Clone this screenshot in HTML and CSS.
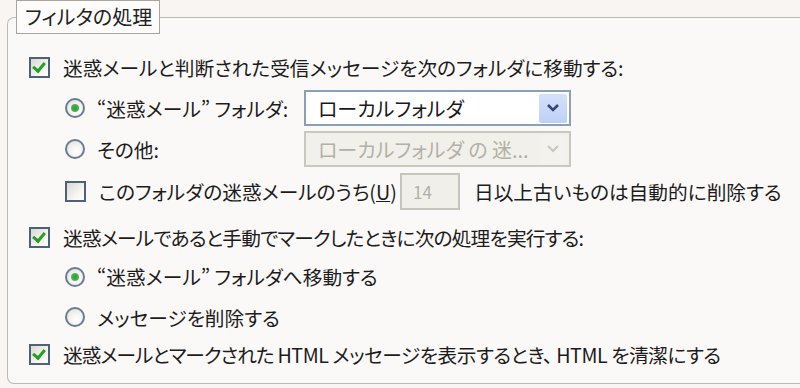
FILE: index.html
```html
<!DOCTYPE html>
<html lang="ja">
<head>
<meta charset="utf-8">
<link rel="stylesheet" href="styles.css">
</head>
<body>
<fieldset class="group">
  <legend class="legend">フィルタの処理</legend>
  <div class="row r1 lvl1">
    <span class="cb checked"></span>
    <span class="label">迷惑メールと判断された受信メッセージを次のフォルダに移動する:</span>
  </div>
  <div class="row r2 lvl2">
    <span class="rb checked"></span>
    <span class="label fixed">“迷惑メール” フォルダ:</span>
    <span class="select">
      <span class="sel-text">ローカルフォルダ</span>
      <span class="sel-btn"><svg width="14" height="10" viewBox="0 0 14 10"><path d="M2 2 L7 7 L12 2" fill="none" stroke="#33466f" stroke-width="2.6"/></svg></span>
    </span>
  </div>
  <div class="row r3 lvl2">
    <span class="rb"></span>
    <span class="label fixed">その他:</span>
    <span class="select disabled">
      <span class="sel-text">ローカルフォルダ の 迷...</span>
      <span class="sel-btn"><svg width="14" height="10" viewBox="0 0 14 10"><path d="M2 2 L7 7 L12 2" fill="none" stroke="#cbc8bf" stroke-width="2.2"/></svg></span>
    </span>
  </div>
  <div class="row r4 lvl2">
    <span class="cb"></span>
    <span class="label keep">このフォルダの迷惑メールのうち(<u>U</u>)</span>
    <span class="numbox">14</span>
    <span class="label">日以上古いものは自動的に削除する</span>
  </div>
  <div class="row r5 lvl1">
    <span class="cb checked"></span>
    <span class="label tight">迷惑メールであると手動でマークしたときに次の処理を実行する:</span>
  </div>
  <div class="row r6 lvl2">
    <span class="rb checked"></span>
    <span class="label">“迷惑メール” フォルダへ移動する</span>
  </div>
  <div class="row r7 lvl2">
    <span class="rb"></span>
    <span class="label">メッセージを削除する</span>
  </div>
  <div class="row r8 lvl1">
    <span class="cb checked"></span>
    <span class="label tight8"><span class="tighter">迷惑メールとマークされた</span> HTML メッセージを表示するとき、 HTML を清潔にする</span>
  </div>
</fieldset>
</body>
</html>
```
FILE: styles.css
```css
html, body {
  margin: 0;
  padding: 0;
  background: #f8f5f2;
  width: 800px;
  height: 388px;
  overflow: hidden;
  font-family: "Noto Sans CJK JP", "Liberation Sans", sans-serif;
  font-feature-settings: "palt";
  color: #1c1c1c;
}

.group {
  margin: 0 0 0 7px;
  padding: 0;
  width: 820px;
  height: 384px;
  box-sizing: border-box;
  border: 1px solid #bdb9b3;
  border-right: none;
  border-radius: 7px 0 0 7px;
  background: #fbf9f7;
}

.legend {
  margin-left: 8px;
  padding: 3px 7px 3px 8px;
  border: 1px solid #a9a6a2;
  background: #fdfcfb;
  font-size: 20px;
  line-height: 26px;
  color: #222;
}

.row {
  display: flex;
  align-items: center;
  height: 41px;
  font-size: 19.7px;
}

.lvl1 { padding-left: 21px; }
.lvl2 { padding-left: 57px; }

.r1 { margin-top: 13px; }
.r2 { height: 40px; }
.r3 { height: 42px; }
.r4 { height: 42px; }
.r5 { margin-top: 4px; height: 42px; }
.r6 { height: 37px; }
.r7 { height: 44px; }
.r8 { height: 30px; }

.label { white-space: nowrap; }
.fixed { width: 207px; }
.keep { width: 301px; flex: none; }
.tight { letter-spacing: -0.8px; }
.tight8 { letter-spacing: -0.45px; }
.tighter { letter-spacing: -1px; }

.cb {
  flex: none;
  width: 17px;
  height: 17px;
  border: 2px solid #4f6079;
  background: linear-gradient(135deg, #d9d8d0 0%, #f4f4f0 60%, #ffffff 100%);
  margin-right: 13px;
  position: relative;
}
.cb.checked::after {
  content: "";
  position: absolute;
  left: 4px;
  top: 1px;
  width: 5px;
  height: 9px;
  border-right: 3px solid #24a024;
  border-bottom: 3px solid #24a024;
  transform: rotate(40deg);
}

.rb {
  flex: none;
  width: 16px;
  height: 16px;
  border-radius: 50%;
  border: 2px solid #6b7c92;
  background: radial-gradient(circle at 60% 65%, #ffffff 0%, #f2f1ec 50%, #d6d5cd 100%);
  margin-right: 12px;
  position: relative;
}
.rb.checked::after {
  content: "";
  position: absolute;
  left: 4px;
  top: 4px;
  width: 8px;
  height: 8px;
  border-radius: 50%;
  background: radial-gradient(circle, #2f9a35 0%, #40b24a 55%, #8fd690 100%);
}

.select {
  flex: none;
  width: 267px;
  height: 36px;
  box-sizing: border-box;
  border: 2px solid #8aa0b9;
  background: #ffffff;
  display: flex;
  align-items: center;
  justify-content: space-between;
  padding: 0 2px 0 12px;
}
.sel-text { font-size: 20px; color: #1a1a1a; }
.sel-btn {
  width: 28px;
  height: 29px;
  background: linear-gradient(180deg, #d4e1fb 0%, #bfd0f6 100%);
  border-radius: 2px;
  display: flex;
  align-items: center;
  justify-content: center;
}

.select.disabled {
  background: #f2f0eb;
  border-color: #cac8be;
}
.select.disabled .sel-text { color: #b3b0a6; }
.select.disabled .sel-btn { background: #f3f2ee; }

.numbox {
  flex: none;
  width: 60px;
  height: 37px;
  box-sizing: border-box;
  border: 2px solid #c6c4bb;
  background: #f1efea;
  color: #b2afa5;
  font-size: 17px;
  display: flex;
  align-items: center;
  padding-left: 11px;
  margin-right: 14px;
}
```
